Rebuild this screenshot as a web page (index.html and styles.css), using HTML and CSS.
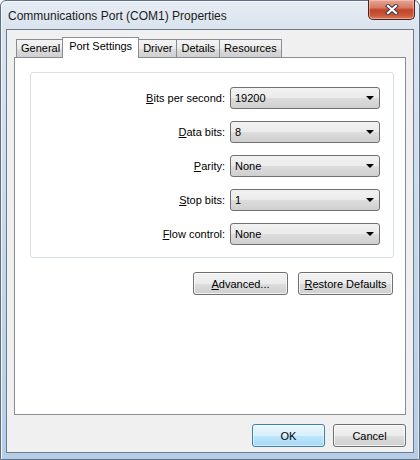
FILE: index.html
```html
<!DOCTYPE html>
<html lang="en">
<head>
    <meta charset="UTF-8">
    <title>Communications Port (COM1) Properties</title>
    <link rel="stylesheet" href="styles.css">
</head>
<body>
    <div class="window">
        <div class="titlebar">
            <span class="title">Communications Port (COM1) Properties</span>
            <span class="close">
                <svg width="14" height="11" viewBox="0 0 14 11">
                    <path d="M3 2 L11 9 M11 2 L3 9" stroke="#3b3f47" stroke-width="4.2" stroke-linecap="square"/>
                    <path d="M3 2 L11 9 M11 2 L3 9" stroke="#ffffff" stroke-width="2.2" stroke-linecap="square"/>
                </svg>
            </span>
        </div>

        <div class="client">
            <div class="tabs">
                <span class="tab">General</span>
                <span class="tab active">Port Settings</span>
                <span class="tab">Driver</span>
                <span class="tab">Details</span>
                <span class="tab">Resources</span>
            </div>

            <div class="panel">
                <div class="group">
                    <label class="label"><u>B</u>its per second:</label>
                    <div class="select">19200<span class="arrow"></span></div>

                    <label class="label"><u>D</u>ata bits:</label>
                    <div class="select">8<span class="arrow"></span></div>

                    <label class="label"><u>P</u>arity:</label>
                    <div class="select">None<span class="arrow"></span></div>

                    <label class="label"><u>S</u>top bits:</label>
                    <div class="select">1<span class="arrow"></span></div>

                    <label class="label"><u>F</u>low control:</label>
                    <div class="select">None<span class="arrow"></span></div>
                </div>

                <div class="panel-buttons">
                    <button class="btn wide"><u>A</u>dvanced...</button>
                    <button class="btn wide"><u>R</u>estore Defaults</button>
                </div>
            </div>

            <div class="footer">
                <button class="btn default">OK</button>
                <button class="btn">Cancel</button>
            </div>
        </div>
    </div>
</body>
</html>
```

FILE: styles.css
```css
body {
    margin: 0;
    font-family: "Liberation Sans", Arial, sans-serif;
    font-size: 11px;
    color: #000;
    background: #ffffff;
}
.window {
    width: 420px;
    height: 460px;
    box-sizing: border-box;
    border: 1px solid #5f6f82;
    border-radius: 6px 6px 0 0;
    background: linear-gradient(to bottom, #e6ecf3 0, #dae4ef 28px, #c3d6ea 60%, #b7cde7 100%);
    box-shadow: inset 1px 1px 0 #f4f8fc, inset -1px 0 0 #dfe9f4;
}
.titlebar {
    height: 28px;
    display: flex;
    justify-content: space-between;
    align-items: flex-start;
}
.title {
    padding: 7px 0 0 7px;
    font-size: 12px;
    line-height: 16px;
    color: #1b1b1b;
}
.close {
    width: 47px;
    height: 20px;
    box-sizing: border-box;
    margin: -1px 4px 0 0;
    border: 1px solid #4f2019;
    border-top: none;
    border-radius: 0 0 5px 5px;
    background: linear-gradient(to bottom, #e7a596 0, #d77b66 40%, #c2432b 52%, #cb5638 80%, #d97d60 100%);
    box-shadow: inset 0 0 0 1px rgba(255, 220, 210, 0.45);
    display: flex;
    align-items: center;
    justify-content: center;
}
.client {
    height: 424px;
    box-sizing: border-box;
    margin: 0 5px;
    border: 1px solid #6d7c8c;
    background: #f0f0f0;
    padding: 7px 7px 0 7px;
}
.tabs {
    height: 20px;
    display: flex;
    align-items: flex-end;
    padding-left: 2px;
    position: relative;
    z-index: 1;
}
.tab {
    height: 18px;
    box-sizing: border-box;
    padding: 2px 4px 0 4px;
    margin-right: -1px;
    border: 1px solid #898c95;
    border-bottom: none;
    background: linear-gradient(to bottom, #f3f3f3 0, #ebebeb 50%, #dddddd 51%, #cfcfcf 100%);
}
.tab.active {
    height: 21px;
    margin: 0 -1px -1px -2px;
    padding: 2px 6px 0 6px;
    background: #ffffff;
    position: relative;
    z-index: 2;
}
.panel {
    height: 358px;
    box-sizing: border-box;
    border: 1px solid #898c95;
    background: #ffffff;
    padding: 14px 11px 0 15px;
}
.group {
    height: 186px;
    box-sizing: border-box;
    border: 1px solid #d5dfe5;
    border-radius: 3px;
    padding: 14px 13px 0 0;
    display: grid;
    grid-template-columns: 1fr 150px;
    grid-auto-rows: 22px;
    column-gap: 5px;
    row-gap: 12px;
    align-content: start;
}
.label {
    text-align: right;
    line-height: 22px;
}
.select {
    position: relative;
    box-sizing: border-box;
    border: 1px solid #707070;
    border-radius: 3px;
    background: linear-gradient(to bottom, #f2f2f2 0, #ebebeb 50%, #dddddd 51%, #cfcfcf 100%);
    padding-left: 4px;
    line-height: 20px;
}
.arrow {
    position: absolute;
    right: 5px;
    top: 8px;
    width: 0;
    height: 0;
    border-left: 4px solid transparent;
    border-right: 4px solid transparent;
    border-top: 4px solid #000;
}
.panel-buttons {
    display: flex;
    justify-content: flex-end;
    gap: 10px;
    margin-top: 14px;
    padding-right: 1px;
}
.btn {
    height: 23px;
    box-sizing: border-box;
    border: 1px solid #707070;
    border-radius: 3px;
    background: linear-gradient(to bottom, #f2f2f2 0, #ebebeb 50%, #dddddd 51%, #cfcfcf 100%);
    box-shadow: inset 0 0 0 1px rgba(255, 255, 255, 0.7);
    font-family: "Liberation Sans", Arial, sans-serif;
    font-size: 11px;
    color: #000;
    padding: 0;
    width: 73px;
}
.btn.wide {
    width: 95px;
}
.btn.default {
    border-color: #3c7fb1;
    background: linear-gradient(to bottom, #eaf6fd 0, #d9f0fc 50%, #bee6fd 51%, #a7d9f5 100%);
    box-shadow: inset 0 0 0 1px rgba(255, 255, 255, 0.5);
}
.footer {
    display: flex;
    justify-content: flex-end;
    gap: 8px;
    margin-top: 9px;
}
```
